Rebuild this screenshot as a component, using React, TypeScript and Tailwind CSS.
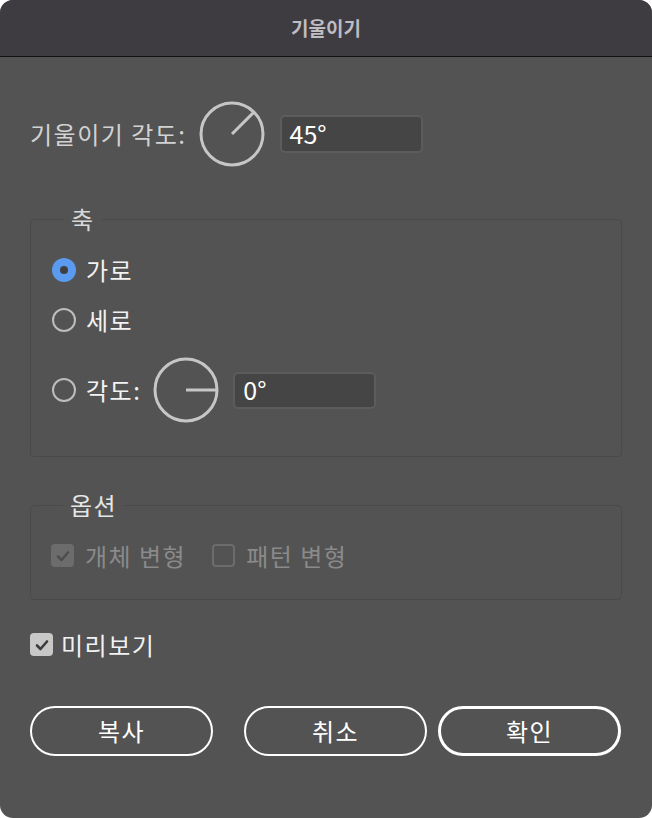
import * as React from "react";

const font = { fontFamily: '"Noto Sans CJK KR", "Noto Sans", sans-serif' };

const Dial = ({ angle }: { angle: number }) => {
  const r = 31;
  const rad = (angle * Math.PI) / 180;
  const x2 = 33 + r * Math.cos(rad);
  const y2 = 33 - r * Math.sin(rad);
  return (
    <svg width="66" height="66" viewBox="0 0 66 66" className="shrink-0">
      <circle cx="33" cy="33" r="31" fill="none" stroke="#c6c6c6" strokeWidth="3" />
      <line x1="33" y1="33" x2={x2} y2={y2} stroke="#c6c6c6" strokeWidth="3" />
    </svg>
  );
};

const Radio = ({ checked }: { checked?: boolean }) =>
  checked ? (
    <span className="w-[24px] h-[24px] rounded-full bg-[#5a9bf0] flex items-center justify-center shrink-0">
      <span className="w-[8px] h-[8px] rounded-full bg-[#3f3f3f]" />
    </span>
  ) : (
    <span className="w-[24px] h-[24px] rounded-full border-2 border-[#bdbdbd] shrink-0" />
  );

const Check = ({ color }: { color: string }) => (
  <svg width="16" height="16" viewBox="0 0 16 16">
    <path d="M3 8.5 L6.5 12 L13 4.5" fill="none" stroke={color} strokeWidth="2.6" strokeLinecap="round" strokeLinejoin="round" />
  </svg>
);

const label = "text-[24px] tracking-[1.5px] leading-[24px]";

const App = () => {
  return (
    <div className="w-[652px] h-[818px] bg-white" style={font}>
      <div className="h-full rounded-[13px] overflow-hidden bg-[#535353] flex flex-col">
        <div className="h-[57px] shrink-0 bg-[#3e3b41] border-b border-[#111] flex items-center justify-center text-[19px] font-bold text-[#bfbcc2]">
          기울이기
        </div>

        <div className="px-[30px] flex flex-col">
          <div className="mt-[44px] flex items-center h-[66px]">
            <span className={`${label} text-[#d2d2d2]`}>기울이기 각도:</span>
            <span className="ml-[12px]">
              <Dial angle={45} />
            </span>
            <div className="ml-[15px] w-[143px] h-[38px] bg-[#454545] border-2 border-[#5c5c5c] rounded-[5px] flex items-center pl-[8px] text-[25px] text-white">
              45°
            </div>
          </div>

          <fieldset className="mt-[40px] border border-[#4a4a4a] rounded-[4px] pl-[21px] pb-[33px]">
            <legend className={`ml-[12px] px-[7px] text-[#d8d8d8] ${label}`}>축</legend>
            <div className="mt-[24px] h-[30px] flex items-center">
              <Radio checked />
              <span className={`ml-[10px] text-[#f2f2f2] ${label}`}>가로</span>
            </div>
            <div className="mt-[20px] h-[30px] flex items-center">
              <Radio />
              <span className={`ml-[10px] text-[#f2f2f2] ${label}`}>세로</span>
            </div>
            <div className="mt-[22px] h-[66px] flex items-center">
              <Radio />
              <span className={`ml-[10px] text-[#f2f2f2] ${label}`}>각도:</span>
              <span className="ml-[12px]">
                <Dial angle={0} />
              </span>
              <div className="ml-[14px] w-[143px] h-[37px] bg-[#454545] border-2 border-[#5c5c5c] rounded-[5px] flex items-center pl-[8px] text-[25px] text-white">
                0°
              </div>
            </div>
          </fieldset>

          <fieldset className="mt-[36px] border border-[#4a4a4a] rounded-[4px] pl-[20px] pb-[32px]">
            <legend className={`ml-[12px] px-[7px] text-[#e6e6e6] ${label}`}>옵션</legend>
            <div className="mt-[27px] h-[23px] flex items-center">
              <span className="w-[23px] h-[23px] rounded-[4px] bg-[#6c6c6c] flex items-center justify-center shrink-0">
                <Check color="#4e4e4e" />
              </span>
              <span className={`ml-[11px] text-[#8a8a8a] ${label}`}>개체 변형</span>
              <span className="ml-[26px] w-[23px] h-[23px] rounded-[4px] border-2 border-[#6c6c6c] shrink-0" />
              <span className={`ml-[11px] text-[#8a8a8a] ${label}`}>패턴 변형</span>
            </div>
          </fieldset>

          <div className="mt-[33px] h-[23px] flex items-center">
            <span className="w-[23px] h-[23px] rounded-[4px] bg-[#c8c8c8] flex items-center justify-center shrink-0">
              <Check color="#3c3c3c" />
            </span>
            <span className={`ml-[8px] text-[#f2f2f2] ${label}`}>미리보기</span>
          </div>

          <div className="mt-[50px] flex">
            <button className={`w-[183px] h-[50px] rounded-full border-2 border-white text-white ${label}`}>복사</button>
            <button className={`ml-[31px] w-[183px] h-[50px] rounded-full border-2 border-white text-white ${label}`}>취소</button>
            <button className={`ml-[11px] w-[183px] h-[50px] rounded-full border-[3px] border-white text-white ${label}`}>확인</button>
          </div>
        </div>
      </div>
    </div>
  );
};

export default App;
